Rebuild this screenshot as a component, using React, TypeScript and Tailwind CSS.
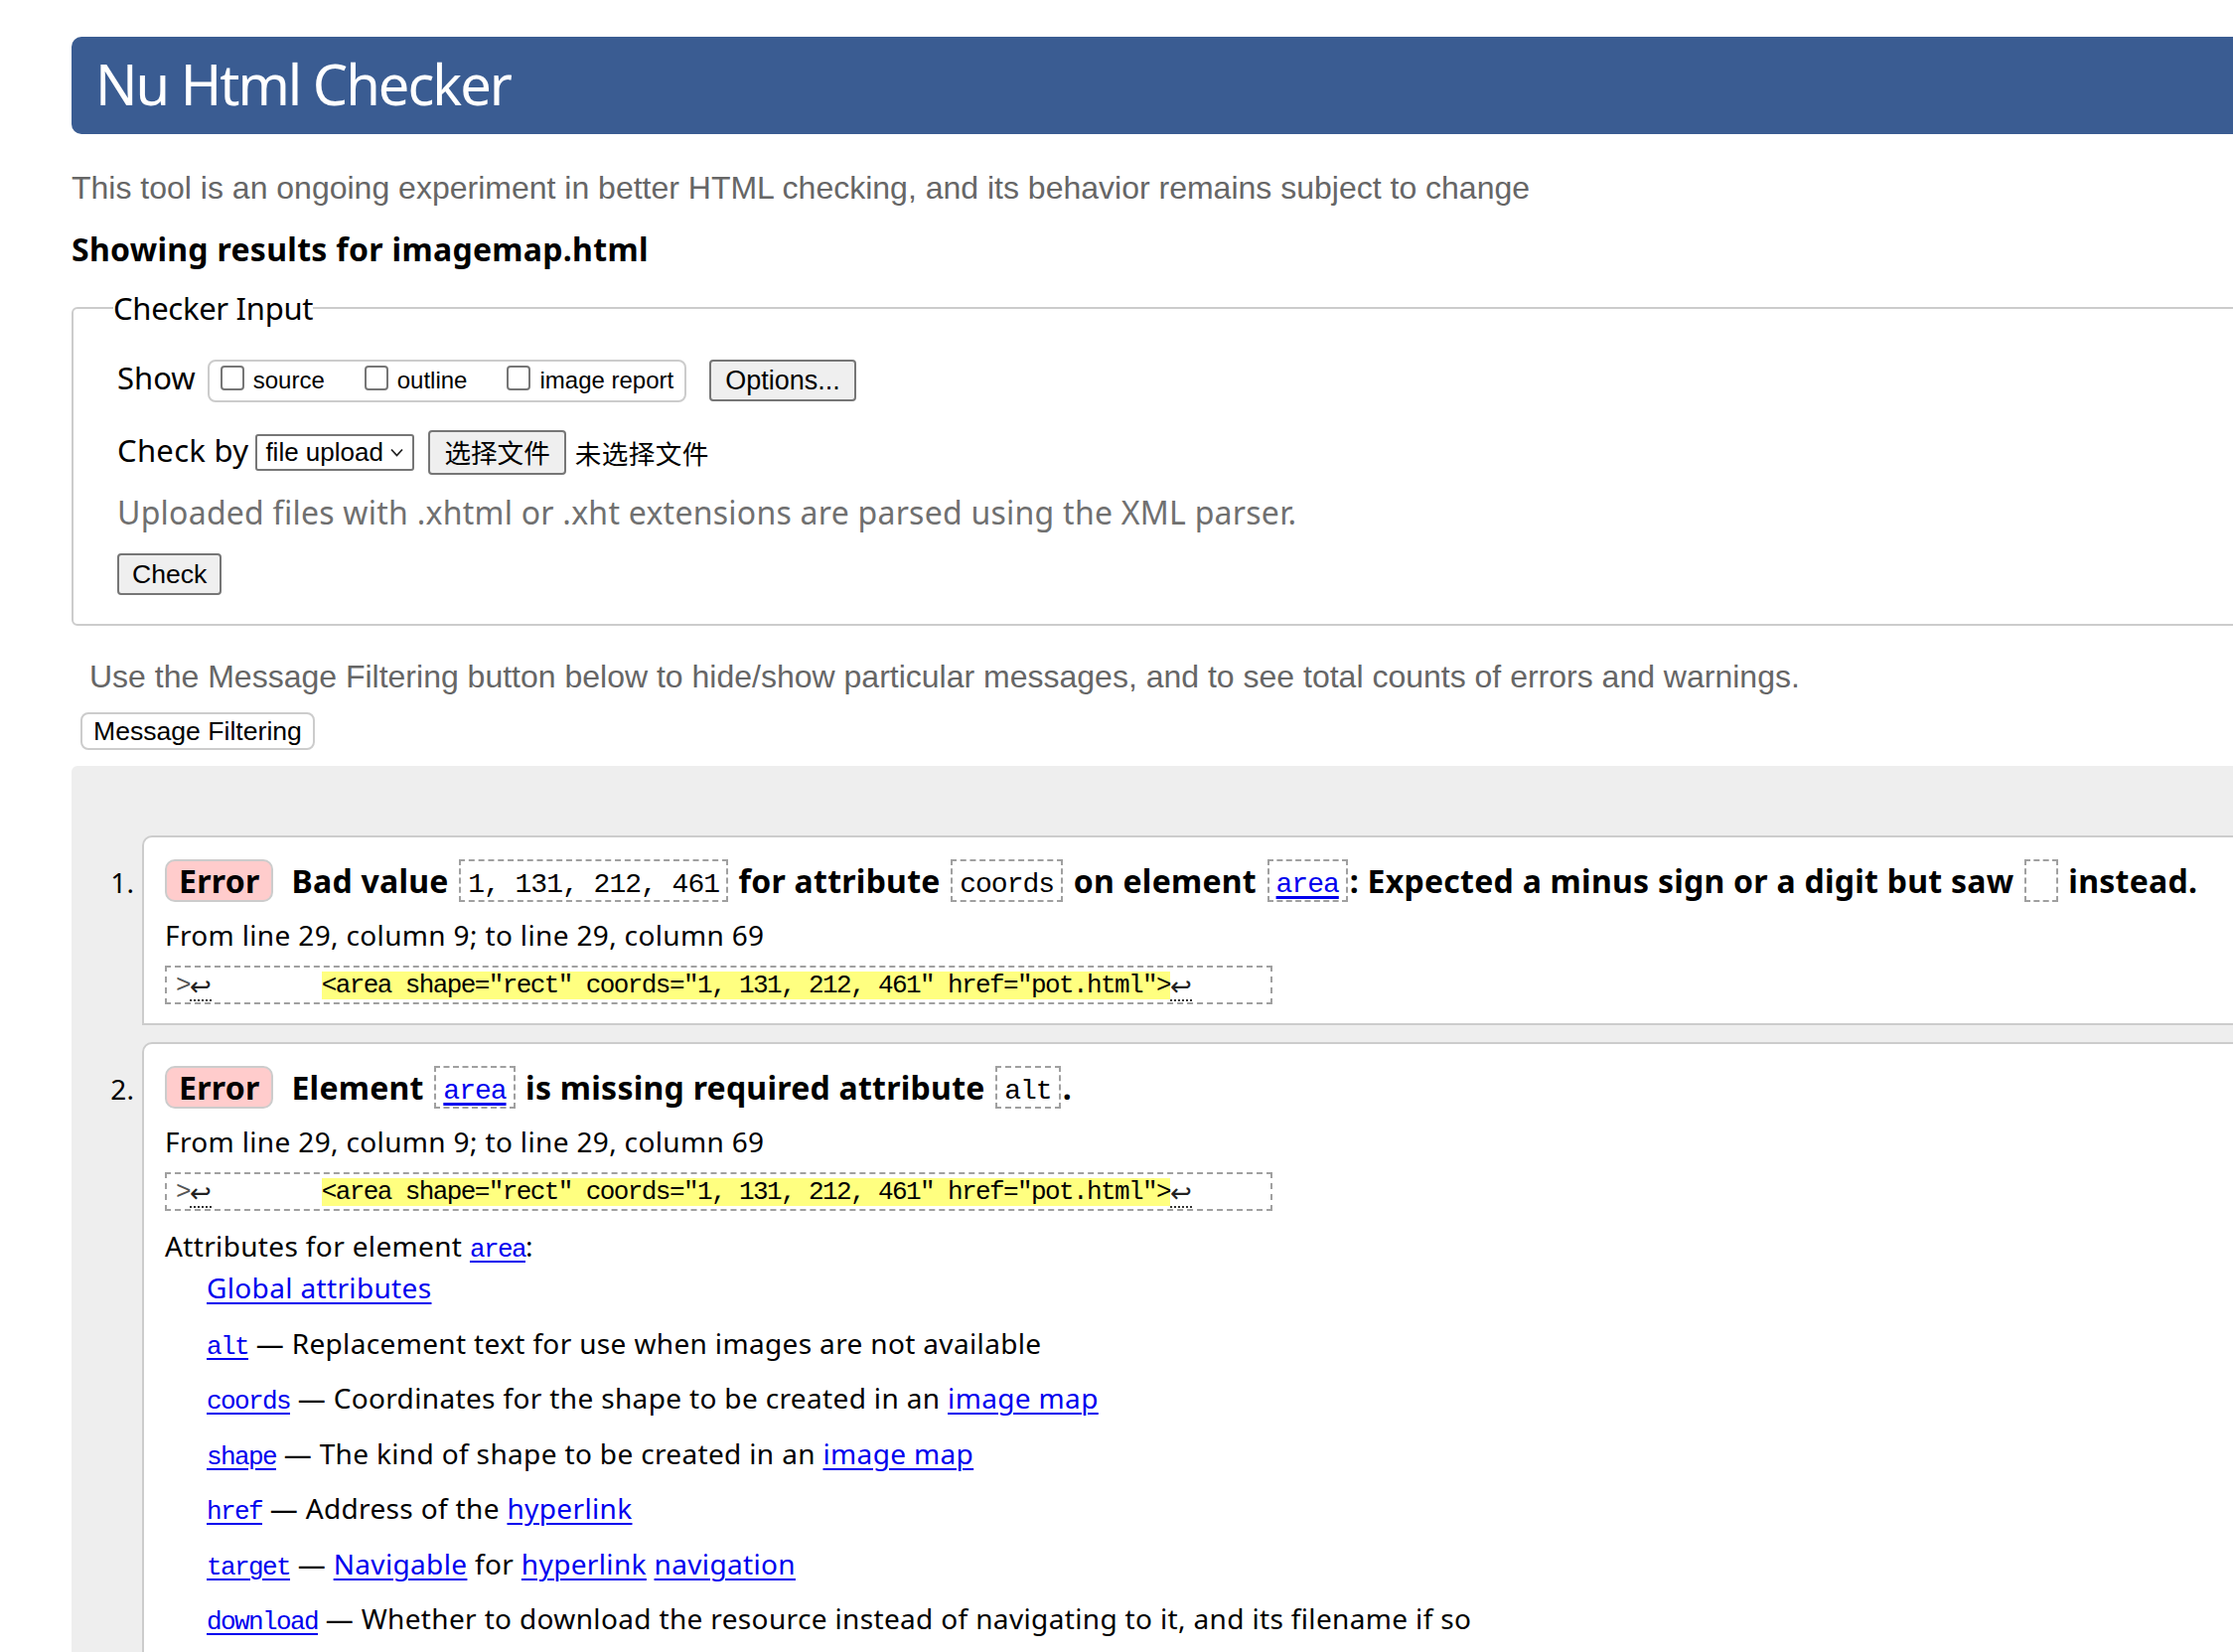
import React from 'react';

// fonts
const SANS = "font-['Noto_Sans','Noto_Sans_CJK_SC',sans-serif]";
const ARIAL = "font-['Liberation_Sans','Noto_Sans_CJK_SC',Arial,sans-serif]";
const MONO = "font-['Liberation_Mono','DejaVu_Sans_Mono',monospace]";
const CJK = "font-['Noto_Sans_CJK_SC',sans-serif]";

const EXTRACT = '<area shape="rect" coords="1, 131, 212, 461" href="pot.html">';

const Checkbox: React.FC = () => (
  <span className="mb-[5px] inline-block h-[25px] w-[24px] flex-none rounded-[4px] border-2 border-[#767676] bg-white" />
);

const Code: React.FC<{ children: React.ReactNode; link?: boolean }> = ({ children, link }) => (
  <span
    className={`mx-[2px] block h-[43px] flex-none border-2 border-dashed border-[#a0a0a0] px-[7px] pt-[9px] ${MONO} text-[28px] font-normal leading-[30px] tracking-[-1px]`}
  >
    {link ? (
      <a className="text-[#0000ee] underline decoration-[3px] underline-offset-[4px]">{children}</a>
    ) : (
      children
    )}
  </span>
);

const Ret: React.FC = () => (
  <span className="mb-[1px] flex-none self-end border-b-2 border-dotted border-[#333] font-['DejaVu_Sans',sans-serif] text-[26px] leading-[25px] tracking-normal text-[#222]">
    ↩
  </span>
);

const Extract: React.FC = () => (
  <div
    className={`mt-[13px] flex h-[39px] w-[1115px] items-center whitespace-pre border-2 border-dashed border-[#a0a0a0] pl-[9px] ${MONO} text-[26px] tracking-[-1.6px]`}
  >
    <span className="leading-[28px] text-[#555]">&gt;</span>
    <Ret />
    <span className="w-[111px] flex-none" />
    <mark className="bg-[#ffff80] leading-[28px] text-black">{EXTRACT}</mark>
    <Ret />
  </div>
);

const Badge: React.FC = () => (
  <span className="mr-[18px] flex h-[43px] flex-none items-center rounded-[10px] border-2 border-[#ccc] bg-[#fcc] px-[12px]">
    Error
  </span>
);

const Link: React.FC<{ children: React.ReactNode }> = ({ children }) => (
  <a className="text-[#0000ee] underline decoration-[2px] underline-offset-[4px]">{children}</a>
);

const AttrCode: React.FC<{ children: React.ReactNode }> = ({ children }) => (
  <a
    className={`${MONO} text-[26px] leading-none tracking-[-1.6px] text-[#0000ee] underline decoration-[2px] underline-offset-[4px]`}
  >
    {children}
  </a>
);

const Where: React.FC = () => (
  <p className="mt-[15px] leading-[36px]">From line 29, column 9; to line 29, column 69</p>
);

const attrs: { name: string; desc: React.ReactNode }[] = [
  { name: 'alt', desc: 'Replacement text for use when images are not available' },
  {
    name: 'coords',
    desc: (
      <>
        Coordinates for the shape to be created in an <Link>image map</Link>
      </>
    ),
  },
  {
    name: 'shape',
    desc: (
      <>
        The kind of shape to be created in an <Link>image map</Link>
      </>
    ),
  },
  {
    name: 'href',
    desc: (
      <>
        Address of the <Link>hyperlink</Link>
      </>
    ),
  },
  {
    name: 'target',
    desc: (
      <>
        <Link>Navigable</Link> for <Link>hyperlink</Link> <Link>navigation</Link>
      </>
    ),
  },
  { name: 'download', desc: 'Whether to download the resource instead of navigating to it, and its filename if so' },
];

const App: React.FC = () => {
  return (
    <div className={`h-[1663px] w-full overflow-hidden bg-white text-black ${SANS}`}>
      <div className="ml-[72px] w-[2400px] pt-[37px]">
        <h1 className="flex h-[98px] items-center rounded-[10px] bg-[#3a5c92] pb-[5px] pl-[24px] text-[56px] leading-none tracking-[-2px] text-white">
          Nu Html Checker
        </h1>

        <p className={`mt-[36px] text-[32px] leading-[36px] text-[#666] ${ARIAL}`}>
          This tool is an ongoing experiment in better HTML checking, and its behavior remains subject to change
        </p>

        <h2 className="mt-[26px] text-[32px] font-bold leading-[36px] tracking-[0.3px]">
          Showing results for imagemap.html
        </h2>

        <fieldset className="mt-[23px] rounded-[6px] border-2 border-[#ccc]">
          <legend className="ml-[40px] text-[31px] leading-[36px] tracking-[-0.3px]">Checker Input</legend>
          <div className="pb-[29px] pl-[44px] pt-[33px]">
            <div className="flex h-[44px] items-center">
              <span className="mb-[6px] mr-[12px] text-[31px]">Show</span>
              <div
                className={`flex h-[43px] items-center gap-[40px] rounded-[8px] border-2 border-[#ccc] px-[11px] text-[24px] ${ARIAL}`}
              >
                <label className="flex items-center gap-[9px]">
                  <Checkbox />
                  <span>source</span>
                </label>
                <label className="flex items-center gap-[9px]">
                  <Checkbox />
                  <span>outline</span>
                </label>
                <label className="flex items-center gap-[9px]">
                  <Checkbox />
                  <span>image report</span>
                </label>
              </div>
              <button
                className={`ml-[23px] h-[42px] rounded-[4px] border-2 border-[#767676] bg-[#efefef] px-[14px] text-[27px] leading-none ${ARIAL}`}
              >
                Options...
              </button>
            </div>

            <div className="mt-[28px] flex h-[45px] items-center">
              <span className="mb-[4px] text-[31px] tracking-[0.3px]">Check by</span>
              <div
                className={`ml-[7px] flex h-[37px] w-[160px] items-center justify-between rounded-[3px] border-2 border-[#767676] bg-white pl-[8px] pr-[9px] text-[26px] ${ARIAL}`}
              >
                <span>file upload</span>
                <svg width="13" height="9" viewBox="0 0 13 9" fill="none" stroke="#222" strokeWidth="1.8">
                  <path d="M1 1.5 L6.5 7.5 L12 1.5" />
                </svg>
              </div>
              <button
                className={`ml-[14px] h-[45px] rounded-[4px] border-2 border-[#767676] bg-[#efefef] px-[14px] text-[26.6px] leading-none ${CJK}`}
              >
                选择文件
              </button>
              <span className={`ml-[9px] text-[26.6px] tracking-[0.4px] ${CJK}`}>未选择文件</span>
            </div>

            <p className="mt-[20px] text-[32px] leading-[36px] tracking-[0.25px] text-[#707070]">
              Uploaded files with .xhtml or .xht extensions are parsed using the XML parser.
            </p>

            <button
              className={`mt-[23px] block h-[42px] rounded-[4px] border-2 border-[#767676] bg-[#efefef] px-[13px] text-[26.6px] leading-none ${ARIAL}`}
            >
              Check
            </button>
          </div>
        </fieldset>

        <p className={`ml-[18px] mt-[33px] text-[32px] leading-[36px] text-[#666] ${ARIAL}`}>
          Use the Message Filtering button below to hide/show particular messages, and to see total counts of errors and
          warnings.
        </p>
        <div className="ml-[9px] mt-[18px]">
          <button
            className={`h-[38px] rounded-[8px] border-2 border-[#ccc] bg-white px-[11px] text-[26.6px] leading-none ${ARIAL}`}
          >
            Message Filtering
          </button>
        </div>

        <div className="mt-[16px] rounded-tl-[6px] bg-[#eee] pl-[71px] pt-[70px]">
          <ol className="list-decimal text-[28px] tracking-[0.35px]">
            <li className="mb-[17px] rounded-tl-[10px] border-2 border-[#ccc] bg-white pb-[19px] pl-[21px] pt-[22px]">
              <div className="flex h-[43px] items-center whitespace-pre text-[32px] font-bold tracking-[0.25px]">
                <Badge />
                <span>Bad value </span>
                <Code>1, 131, 212, 461</Code>
                <span> for attribute </span>
                <Code>coords</Code>
                <span> on element </span>
                <Code link>area</Code>
                <span>: Expected a minus sign or a digit but saw </span>
                <Code>{' '}</Code>
                <span> instead.</span>
              </div>
              <Where />
              <Extract />
            </li>

            <li className="rounded-tl-[10px] border-2 border-[#ccc] bg-white pb-[19px] pl-[21px] pt-[22px]">
              <div className="flex h-[43px] items-center whitespace-pre text-[32px] font-bold tracking-[0.25px]">
                <Badge />
                <span>Element </span>
                <Code link>area</Code>
                <span> is missing required attribute </span>
                <Code>alt</Code>
                <span>.</span>
              </div>
              <Where />
              <Extract />
              <p className="mt-[17px] leading-[36px]">
                Attributes for element <AttrCode>area</AttrCode>:
              </p>
              <div className="mt-[6px] flex flex-col gap-[19.5px] pl-[42px] leading-[36px]">
                <div>
                  <Link>Global attributes</Link>
                </div>
                {attrs.map((a) => (
                  <div key={a.name} className="whitespace-nowrap">
                    <AttrCode>{a.name}</AttrCode> — {a.desc}
                  </div>
                ))}
              </div>
            </li>
          </ol>
        </div>
      </div>
    </div>
  );
};

export default App;
